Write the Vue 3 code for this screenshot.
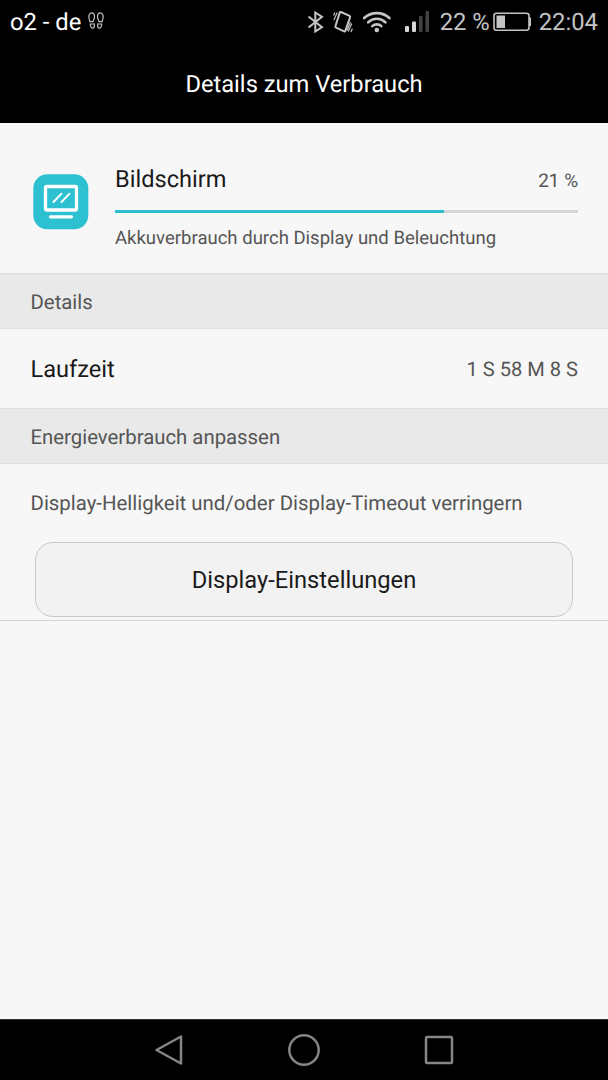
<template>
  <div class="screen">
    <header class="header">
      <div class="status-bar">
        <div class="carrier">
          <span>{{ carrier }}</span>
          <svg class="steps" width="16" height="18" viewBox="0 0 16 18" fill="none" stroke="#c4c4c4" stroke-width="1.2">
            <path d="M3.700.8C1.600.8.700 3 .900 5.200c.2 2 .8 3.300 1 4.400h3.200C5.500 8 6.500 7 6.500 4.500 6.500 2.300 5.400.8 3.700.8z" />
            <path d="M12.300.8c2.100 0 3 2.200 2.800 4.400-.2 2-.8 3.300-1 4.400h-3.200C10.500 8 9.500 7 9.500 4.500c0-2.200 1.100-3.700 2.800-3.700z" />
            <path d="M2.300 12h4v2c0 1.400-.7 2.200-1.800 2.200S2.600 15.300 2.300 12zM13.700 12h-4v2c0 1.400.7 2.200 1.800 2.200s1.900-.9 2.200-4.200z" />
          </svg>
        </div>
        <div class="indicators">
          <svg class="bluetooth" width="18" height="24" viewBox="0 0 18 24" fill="none" stroke="#c4c4c4" stroke-width="2">
            <path d="M1.500 6.500 15 17.200 8.300 21.500v-19L15 6.800 1.500 17.500" />
          </svg>
          <svg class="vibrate" width="20" height="24" viewBox="0 0 20 24" fill="none" stroke="#c4c4c4">
            <path d="M8 2 16.500 5.800q.9.400.6 1.300L12.300 20.800q-.3.900-1.200.5L3 17.600q-.9-.4-.6-1.300L6.800 2.600q.3-.9 1.200-.6z" stroke-width="2" />
            <path d="M4.300 2.500.8 10M1.900 2.500.6 5.500M18.800 13.500l-3.500 8M19.400 18.500 18 22M17.500 12l-3.400 8.500" stroke-width="1.200" />
          </svg>
          <svg class="wifi" width="30" height="24" viewBox="0 0 30 24" fill="none" stroke="#c4c4c4" stroke-width="2.700" stroke-linecap="round">
            <path d="M2.200 8a18.500 18.500 0 0 1 25.200 0M6.200 12.200a12.500 12.500 0 0 1 17.200 0M10.300 16.100a6.500 6.500 0 0 1 9 0" />
            <circle cx="14.800" cy="20" r="2.300" fill="#c4c4c4" stroke="none" />
          </svg>
          <svg class="signal" width="26" height="22" viewBox="0 0 26 22">
            <rect x="0" y="15" width="4" height="6" rx="1" fill="#d8d8d8" />
            <rect x="7" y="10.500" width="4" height="10.500" rx="1" fill="#d8d8d8" />
            <rect x="14" y="5" width="3.500" height="16" rx="1" fill="#444" />
            <rect x="20.500" y="0" width="3.500" height="21" rx="1" fill="#444" />
          </svg>
          <span class="battery-text">{{ battery }} %</span>
          <svg class="battery" width="39" height="20" viewBox="0 0 39 20">
            <rect x="1" y="1.300" width="35" height="17" rx="2.500" fill="none" stroke="#c4c4c4" stroke-width="1.600" />
            <rect x="3.500" y="3.500" width="8.500" height="12.500" fill="#c4c4c4" />
            <path d="M36 5.500h2v8.500h-2z" fill="#c4c4c4" />
          </svg>
          <span class="clock">22:04</span>
        </div>
      </div>
      <h1 class="title">Details zum Verbrauch</h1>
    </header>

    <main class="content">
      <section class="summary">
        <svg class="app-icon" width="56" height="56" viewBox="0 0 56 56">
          <rect x=".3" y=".3" width="55" height="55" rx="14" fill="#2dc0d1" />
          <g fill="none" stroke="#fff" stroke-linecap="round">
            <rect x="12.500" y="12.500" width="31" height="23.500" rx="1.500" stroke-width="3.300" />
            <path d="M17.500 42.800h21" stroke-width="3.300" />
            <path d="m20.500 28 8-8.300M28.500 28l8-8.300" stroke-width="1.900" />
          </g>
        </svg>
        <div class="usage">
          <div class="usage-head">
            <span class="name">Bildschirm</span>
            <span class="percent">{{ usage }} %</span>
          </div>
          <div class="track">
            <div class="fill" :style="{ width: barWidth + '%' }"></div>
          </div>
          <p class="description">Akkuverbrauch durch Display und Beleuchtung</p>
        </div>
      </section>

      <h2 class="section-title">Details</h2>
      <div class="row">
        <span class="row-label">Laufzeit</span>
        <span class="row-value">1 S 58 M 8 S</span>
      </div>

      <h2 class="section-title">Energieverbrauch anpassen</h2>
      <section class="adjust">
        <p class="hint">Display-Helligkeit und/oder Display-Timeout verringern</p>
        <button class="settings-button">Display-Einstellungen</button>
      </section>
    </main>

    <nav class="nav-bar">
      <svg width="30" height="32" viewBox="0 0 30 32">
        <path d="M27 2.500v27L2.500 16z" />
      </svg>
      <svg width="32" height="32" viewBox="0 0 32 32">
        <circle cx="16" cy="16" r="14.700" />
      </svg>
      <svg width="30" height="32" viewBox="0 0 30 32">
        <rect x="2" y="3" width="26" height="26" rx="1" />
      </svg>
    </nav>
  </div>
</template>

<script setup>
import { ref } from 'vue'

const carrier = ref('o2 - de')
const battery = ref(22)
const usage = ref(21)
// bar is scaled against the largest consumer
const barWidth = ref(71)
</script>

<style>
body {
  margin: 0;
  background: #f7f7f7;
}
</style>

<style scoped>
.screen {
  display: flex;
  flex-direction: column;
  width: 608px;
  height: 1080px;
  overflow: hidden;
  background: #f7f7f7;
  color: #1a1a1a;
  font-family: Roboto, "Liberation Sans", sans-serif;
  text-rendering: geometricPrecision;
}

.header {
  height: 123px;
  background: #000;
  color: #fff;
}

.status-bar {
  display: flex;
  justify-content: space-between;
  height: 44px;
  padding: 0 10px;
  font-size: 23.8px;
  line-height: 45px;
}

.carrier,
.indicators {
  display: flex;
  align-items: center;
}

.steps {
  margin: 0 0 2px 7px;
}

.indicators {
  color: #c4c4c4;
}

.bluetooth {
  margin-right: 8px;
}

.vibrate {
  margin-right: 9px;
}

.wifi {
  margin-right: 13px;
}

.signal {
  margin-right: 9px;
}

.battery-text {
  margin-right: 3px;
}

.battery {
  margin-right: 7px;
}

.title {
  margin: 0;
  font-size: 23.7px;
  font-weight: 400;
  line-height: 80px;
  text-align: center;
}

.content {
  flex: 1;
}

.summary {
  display: flex;
  height: 150px;
  padding: 0 30px 0 33px;
  box-sizing: border-box;
}

.app-icon {
  margin: 51px 26px 0 0;
}

.usage {
  flex: 1;
}

.usage-head {
  display: flex;
  justify-content: space-between;
  align-items: center;
  height: 32px;
  padding-top: 40px;
}

.name,
.row-label {
  font-size: 23.6px;
}

.percent {
  padding-top: 3px;
  font-size: 18.9px;
  color: #555;
}

.track {
  height: 3px;
  margin-top: 15px;
  background: #d3d7d9;
}

.fill {
  height: 100%;
  background: #2dc0d1;
}

.description {
  margin: 12px 0 0;
  font-size: 18.55px;
  line-height: 26px;
  color: #555;
}

.section-title {
  height: 56px;
  margin: 0;
  padding: 0 30.5px;
  box-sizing: border-box;
  border-top: 1px solid #dcdede;
  border-bottom: 1px solid #e0e0e0;
  background: #e9e9e9;
  font-size: 20.35px;
  font-weight: 400;
  line-height: 56px;
  color: #555;
}

.row {
  display: flex;
  justify-content: space-between;
  align-items: center;
  height: 80px;
  padding: 0 30px 0 30.5px;
  margin-bottom: -1px;
}

.row-value {
  font-size: 20.1px;
  color: #555;
}

.adjust {
  height: 157px;
  padding: 26px 30px 0;
  box-sizing: border-box;
  border-bottom: 1px solid #d2d5d5;
}

.hint {
  margin: 0;
  padding-left: .5px;
  font-size: 20.4px;
  line-height: 26px;
  color: #555;
}

.settings-button {
  display: block;
  width: 538px;
  height: 75px;
  margin: 26px auto 0;
  border: 1px solid #c8c8c8;
  border-radius: 18px;
  background: #f2f2f2;
  font-family: inherit;
  font-size: 23.7px;
  color: #1a1a1a;
}

.nav-bar {
  display: flex;
  justify-content: space-between;
  align-items: center;
  height: 61px;
  padding: 0 154px;
  box-sizing: border-box;
  border-top: 1px solid #333;
  background: #000;
}

.nav-bar svg {
  fill: none;
  stroke: #858585;
  stroke-width: 2.5;
  stroke-linejoin: round;
}
</style>
